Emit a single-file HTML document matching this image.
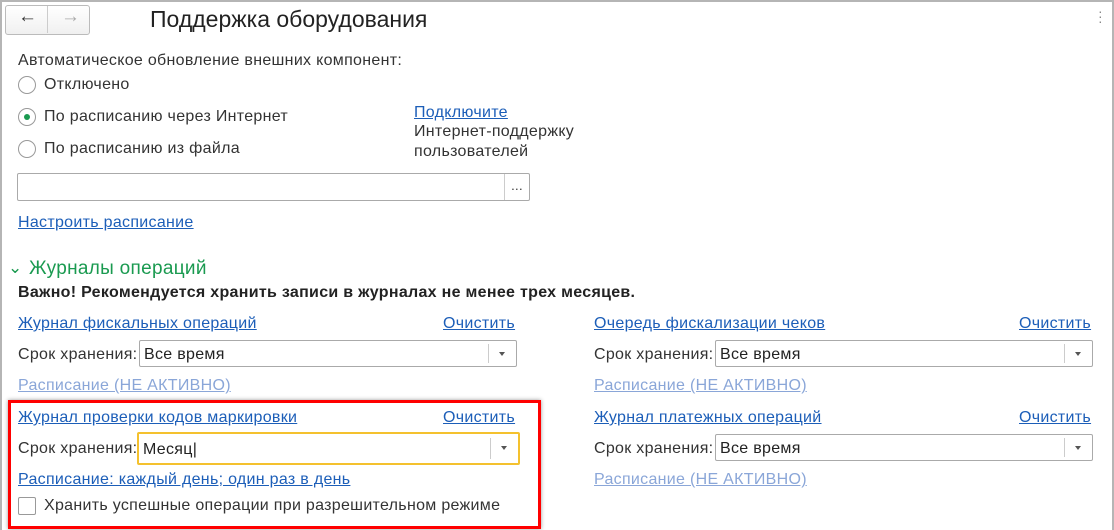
<!DOCTYPE html><html><head><meta charset="utf-8"><style>
body{margin:0;width:1114px;height:530px;background:#fff;font-family:"Liberation Sans",Arial,sans-serif;font-size:16px;letter-spacing:0.3px;color:#333;position:relative;overflow:hidden}
.a{position:absolute;white-space:nowrap}
.frame{position:absolute;left:0;top:0;width:1110px;height:528px;border:2px solid #b5b5b5;border-bottom:none}
.l{color:#1c5eb8;text-decoration:underline}
.dim{color:#8aa6d8;text-decoration:underline}
.rb{position:absolute;width:16px;height:16px;border:1px solid #999;border-radius:50%;background:#fff}
.inp{position:absolute;height:27px;border:1px solid #aaa;border-radius:2px;background:#fff;box-sizing:border-box}
.dd{position:absolute;right:0;top:3px;bottom:3px;width:27px;border-left:1px solid #ccc}
.dd:after{content:"";position:absolute;left:10px;top:8px;border:3px solid transparent;border-top:4px solid #555}
.tx{position:absolute;left:4px;top:5px;color:#222}
</style></head><body>
<div class="frame"></div>
<div class="a" style="left:5px;top:5px;width:83px;height:28px;border:1px solid #bbb;border-radius:3px;background:linear-gradient(#fff,#f0f0f0)"></div>
<div class="a" style="left:47px;top:6px;width:1px;height:27px;background:#ccc"></div>
<div class="a" style="left:18px;top:6px;font-size:19px;color:#333;font-weight:bold">&#8592;</div>
<div class="a" style="left:61px;top:6px;font-size:19px;color:#aaa;font-weight:bold">&#8594;</div>
<div class="a" style="left:150px;top:6px;font-size:23px;color:#222;letter-spacing:0">Поддержка оборудования</div>
<div class="a" style="left:1098px;top:9px;color:#888;font-size:14px;line-height:5px">·<br>·<br>·</div>
<div class="a" style="left:18px;top:52px">Автоматическое обновление внешних компонент:</div>
<div class="rb" style="left:18px;top:76px"></div><div class="a" style="left:44px;top:76px">Отключено</div>
<div class="rb" style="left:18px;top:108px"></div><div class="a" style="left:24px;top:114px;width:6px;height:6px;border-radius:50%;background:#1a9a50"></div><div class="a" style="left:44px;top:108px">По расписанию через Интернет</div>
<div class="rb" style="left:18px;top:140px"></div><div class="a" style="left:44px;top:140px">По расписанию из файла</div>
<div class="a l" style="left:414px;top:104px">Подключите</div>
<div class="a" style="left:414px;top:123px">Интернет-поддержку</div>
<div class="a" style="left:414px;top:143px">пользователей</div>
<div class="inp" style="left:17px;top:173px;width:513px;height:28px"><div style="position:absolute;right:0;top:0;bottom:0;width:24px;border-left:1px solid #ccc;text-align:center;font-size:13px;line-height:24px">...</div></div>
<div class="a l" style="left:18px;top:214px">Настроить расписание</div>
<div class="a" style="left:8px;top:258px;color:#1a9a50;font-size:17px">&#8964;</div>
<div class="a" style="left:29px;top:258px;color:#1a9a50;font-size:19px">Журналы операций</div>
<div class="a" style="left:18px;top:284px;font-weight:bold;color:#222">Важно! Рекомендуется хранить записи в журналах не менее трех месяцев.</div>

<div class="a l" style="left:18px;top:315px">Журнал фискальных операций</div>
<div class="a l" style="left:443px;top:315px">Очистить</div>
<div class="a" style="left:18px;top:346px">Срок хранения:</div>
<div class="inp" style="left:139px;top:340px;width:378px"><span class="tx">Все время</span><div class="dd"></div></div>
<div class="a dim" style="left:18px;top:377px">Расписание (НЕ АКТИВНО)</div>

<div class="a" style="left:8px;top:400px;width:527px;height:123px;border:3px solid #f00;box-shadow:0 0 4px #999"></div>
<div class="a l" style="left:18px;top:409px">Журнал проверки кодов маркировки</div>
<div class="a l" style="left:443px;top:409px">Очистить</div>
<div class="a" style="left:18px;top:440px">Срок хранения:</div>
<div class="inp" style="left:137px;top:432px;width:383px;height:33px;border:2px solid #f4c12e"><span class="tx" style="top:7px">Месяц|</span><div class="dd" style="top:4px;bottom:4px"></div></div>
<div class="a l" style="left:18px;top:471px">Расписание: каждый день; один раз в день</div>
<div class="a" style="left:18px;top:497px;width:16px;height:16px;border:1px solid #999;border-radius:2px"></div>
<div class="a" style="left:44px;top:497px">Хранить успешные операции при разрешительном режиме</div>

<div class="a l" style="left:594px;top:315px">Очередь фискализации чеков</div>
<div class="a l" style="left:1019px;top:315px">Очистить</div>
<div class="a" style="left:594px;top:346px">Срок хранения:</div>
<div class="inp" style="left:715px;top:340px;width:378px"><span class="tx">Все время</span><div class="dd"></div></div>
<div class="a dim" style="left:594px;top:377px">Расписание (НЕ АКТИВНО)</div>
<div class="a l" style="left:594px;top:409px">Журнал платежных операций</div>
<div class="a l" style="left:1019px;top:409px">Очистить</div>
<div class="a" style="left:594px;top:440px">Срок хранения:</div>
<div class="inp" style="left:715px;top:434px;width:378px"><span class="tx">Все время</span><div class="dd"></div></div>
<div class="a dim" style="left:594px;top:471px">Расписание (НЕ АКТИВНО)</div>
</body></html>
